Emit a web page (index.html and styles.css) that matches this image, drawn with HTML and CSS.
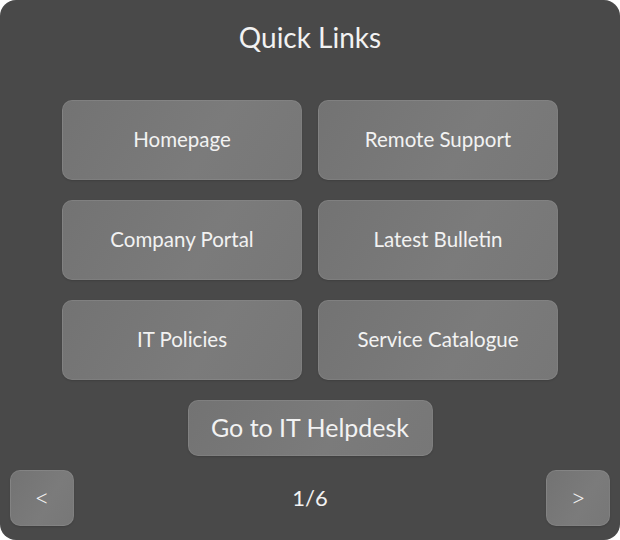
FILE: index.html
```html
<!DOCTYPE html>
<html>
<head>
<meta charset="utf-8">
<link rel="stylesheet" href="styles.css">
</head>
<body>
<div class="panel">
  <h1 class="title">Quick Links</h1>
  <div class="grid">
    <a class="tile">Homepage</a>
    <a class="tile">Remote Support</a>
    <a class="tile">Company Portal</a>
    <a class="tile">Latest Bulletin</a>
    <a class="tile">IT Policies</a>
    <a class="tile">Service Catalogue</a>
  </div>
  <div class="help-row"><a class="help">Go to IT Helpdesk</a></div>
  <div class="nav">
    <a class="navbtn">&lt;</a>
    <span class="page">1/6</span>
    <a class="navbtn">&gt;</a>
  </div>
</div>
</body>
</html>
```
FILE: styles.css
```css
html, body { margin: 0; padding: 0; background: #ffffff; }
body { width: 620px; height: 540px; font-family: Lato, "Noto Sans", sans-serif; color: #f2f2f2; }
.panel {
  box-sizing: border-box;
  width: 620px; height: 540px;
  background: #494949;
  border-radius: 16px;
  padding: 0 10px 14px;
  display: flex; flex-direction: column;
}
.title {
  margin: 0; padding-top: 20px; height: 78px; box-sizing: border-box;
  font-size: 28px; font-weight: 400; text-align: center; line-height: 34px;
}
.grid {
  display: grid; grid-template-columns: 240px 240px; grid-auto-rows: 80px;
  column-gap: 16px; row-gap: 20px; justify-content: center; margin-top: 22px;
}
.tile, .help, .navbtn {
  box-sizing: border-box;
  display: flex; align-items: center; justify-content: center;
  background: linear-gradient(120deg, #737373, #7b7b7b 60%, #777777);
  border: 1px solid rgba(255,255,255,0.08);
  border-radius: 10px;
  box-shadow: 0 1px 2px rgba(0,0,0,0.15);
  padding-bottom: 3px;
}
.tile { font-size: 20.5px; }
.help-row { display: flex; justify-content: center; margin-top: 20px; }
.help { width: 245px; height: 56px; font-size: 25px; }
.nav { display: flex; justify-content: space-between; align-items: center; margin-top: 14px; }
.navbtn { width: 64px; height: 56px; font-size: 26px; font-weight: 300; }
.page { font-size: 22px; padding-bottom: 2px; }
```
